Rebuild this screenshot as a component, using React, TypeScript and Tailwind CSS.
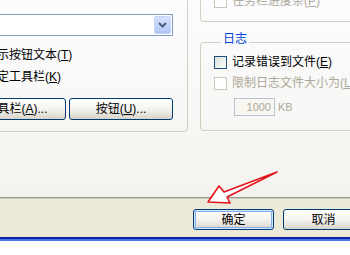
import React from 'react'

const font = "font-['Liberation_Sans','Noto_Sans_CJK_SC',sans-serif]"

const Check = ({ disabled = false }: { disabled?: boolean }) => (
  <span
    className={
      disabled
        ? 'w-[13px] h-[13px] shrink-0 border border-[#CAC8BB] bg-white'
        : 'w-[13px] h-[13px] shrink-0 border border-[#1C5180] bg-gradient-to-br from-[#DCDCD7] to-white'
    }
  />
)

const CheckRow = ({ label, hot, tail = ')', disabled = false, className = '' }: {
  label: string
  hot: string
  tail?: string
  disabled?: boolean
  className?: string
}) => (
  <div className={`flex items-center h-[14px] whitespace-nowrap ${className}`}>
    <Check disabled={disabled} />
    <span className={`ml-[5px] text-[12px] leading-[14px] ${disabled ? 'text-[#ACA899]' : 'text-black'}`}>
      {label}(<span className="underline">{hot}</span>{tail}
    </span>
  </div>
)

const XpButton = ({ children, width, height = 'h-[22px]', isDefault = false }: {
  children: React.ReactNode
  width: string
  height?: string
  isDefault?: boolean
}) => (
  <div
    className={`${width} ${height} shrink-0 flex items-center justify-center rounded-[3px] border border-[#003C74] bg-gradient-to-b from-white via-[#F4F3EF] to-[#D8D4CA] text-[12px] leading-[14px] text-black whitespace-nowrap ${
      isDefault ? 'shadow-[inset_0_0_0_1px_#CEE7FF,inset_0_0_0_2px_#89ADE4]' : ''
    }`}
  >
    {children}
  </div>
)

export default function App() {
  return (
    <div className={`relative w-[350px] h-[255px] overflow-hidden bg-white ${font}`}>
      <div className="flex flex-col w-[350px]">
        {/* tab page */}
        <div className="h-[198px] flex items-start bg-gradient-to-b from-[#FCFCFE] to-[#F4F3EE] border-b border-[#919B9C] overflow-hidden">
          {/* left group box, cut off at top and left */}
          <div className="-ml-[40px] -mt-[20px] w-[228px] h-[152px] shrink-0 border border-[#D0D0BF] rounded-[4px] pl-[6px] flex flex-col">
            <div className="mt-[33px] w-[206px] h-[22px] border border-[#7F9DB9] bg-white flex items-center">
              <span className="flex-1 text-[12px] leading-[14px] text-black whitespace-nowrap overflow-hidden -ml-[26px]">大图标</span>
              <div className="w-[17px] h-[18px] mr-[1px] rounded-[2px] bg-gradient-to-b from-[#D5E1FC] to-[#B2C7F3] border border-[#C3D3FD] flex items-center justify-center">
                <svg width="9" height="6" viewBox="0 0 9 6">
                  <polyline points="1,1 4.5,4.5 8,1" fill="none" stroke="#4D6185" strokeWidth="2" />
                </svg>
              </div>
            </div>
            <CheckRow label="显示按钮文本" hot="T" className="mt-[12px]" />
            <CheckRow label="锁定工具栏" hot="K" className="mt-[8px]" />
            <div className="mt-[14px] flex gap-[3px]">
              <XpButton width="w-[99px]">
                工具栏(<span className="underline">A</span>)...
              </XpButton>
              <XpButton width="w-[104px]">
                按钮(<span className="underline">U</span>)...
              </XpButton>
            </div>
          </div>

          {/* right column */}
          <div className="ml-[12px] flex flex-col w-[200px] shrink-0">
            <div className="-mt-[30px] h-[52px] border border-[#D0D0BF] rounded-[4px] pl-[13px] pt-[23px]">
              <CheckRow label="任务栏进度条" hot="P" disabled />
            </div>
            <fieldset className="mt-[10px] border border-[#D0D0BF] rounded-[4px] pl-[13px] pb-[14px]">
              <legend className="ml-[7px] px-[2px] pb-[6px] text-[12px] leading-[14px] text-[#0046D5]">日志</legend>
              <CheckRow label="记录错误到文件" hot="E" className="mt-[3px]" />
              <CheckRow label="限制日志文件大小为" hot="L" disabled className="mt-[7px]" />
              <div className="mt-[8px] ml-[20px] flex items-center">
                <div className="w-[41px] h-[18px] border border-[#B7C4D6] bg-[#F7F6F1] flex items-center justify-end pr-[3px] text-[11px] text-[#ACA899]">1000</div>
                <span className="ml-[3px] text-[11px] text-[#ACA899]">KB</span>
              </div>
            </fieldset>
          </div>
        </div>

        {/* dialog button bar */}
        <div className="h-[39px] bg-[#ECE9D8] border-t border-[#D0CEBF] pt-[10px] pl-[193px] flex items-start gap-[9px]">
          <XpButton width="w-[81px]" height="h-[21px]" isDefault>确定</XpButton>
          <XpButton width="w-[81px]" height="h-[21px]">取消</XpButton>
        </div>
        <div className="h-[2px] bg-[#0C24A6]" />
        <div className="h-[2px] bg-[#4A73E8]" />
      </div>

      {/* red annotation arrow */}
      <svg className="absolute left-0 top-0 pointer-events-none" width="350" height="255" viewBox="0 0 350 255">
        <polygon
          points="208,202 219,186 224,192 277,172 227,197 230,203"
          fill="white"
          stroke="#E3141B"
          strokeWidth="1.6"
          strokeLinejoin="round"
        />
      </svg>
    </div>
  )
}
